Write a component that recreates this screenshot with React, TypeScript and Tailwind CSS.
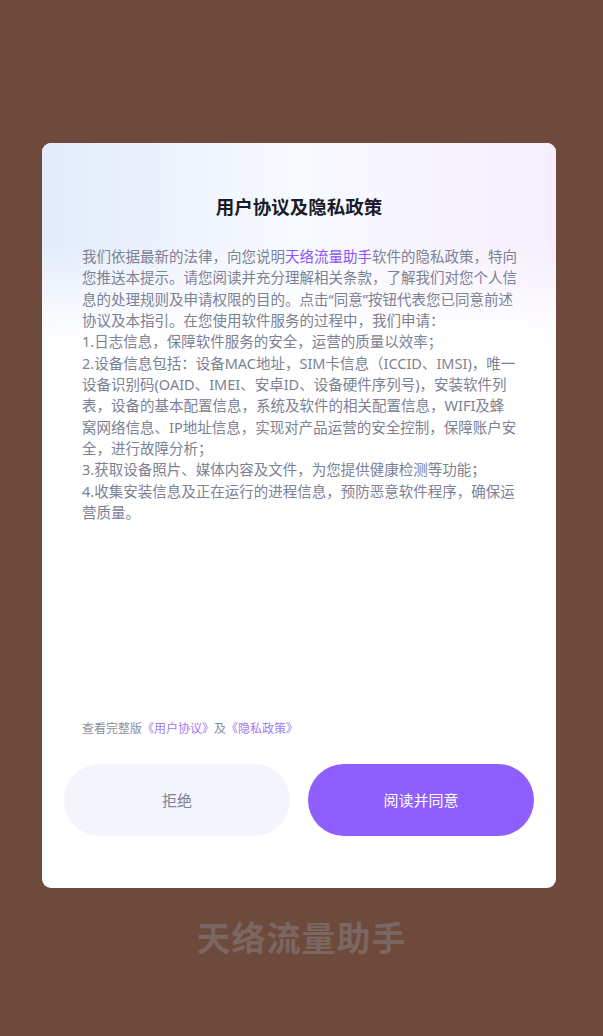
export default function App() {
  const font = "font-['Noto_Sans','Noto_Sans_CJK_SC',sans-serif]";
  return (
    <div className={`min-h-[1036px] w-full bg-[#6d4a3c] ${font} flex flex-col`}>
      <div className="ml-[42px] mt-[143px] w-[514px] h-[745px] rounded-[9px] bg-white overflow-hidden flex flex-col relative">
        <div className="absolute inset-x-0 top-0 h-[200px] bg-gradient-to-r from-[#e2ebfb] via-[#f8fafe] to-[#f6eefc]" />
        <div className="absolute inset-x-0 top-0 h-[200px] bg-gradient-to-b from-transparent via-transparent to-white" />
        <div className="relative flex flex-col flex-1">
          <h1 className="mt-[52px] text-center text-[18.5px] leading-[24px] font-bold text-[#1b1b2a]">用户协议及隐私政策</h1>
          <p className="mt-[27px] pl-[40px] pr-[38px] text-[14.5px] leading-[21.35px] text-[#7d8194]">
            我们依据最新的法律，向您说明<span className="text-[#8a55fb]">天络流量助手</span>软件的隐私政策，特向您推送本提示。请您阅读并充分理解相关条款，了解我们对您个人信息的处理规则及申请权限的目的。点击“同意”按钮代表您已同意前述协议及本指引。在您使用软件服务的过程中，我们申请：
            <br />
            1.日志信息，保障软件服务的安全，运营的质量以效率；
            <br />
            2.设备信息包括：设备MAC地址，SIM卡信息（ICCID、IMSI)，唯一设备识别码(OAID、IMEI、安卓ID、设备硬件序列号)，安装软件列表，设备的基本配置信息，系统及软件的相关配置信息，WIFI及蜂窝网络信息、IP地址信息，实现对产品运营的安全控制，保障账户安全，进行故障分析；
            <br />
            3.获取设备照片、媒体内容及文件，为您提供健康检测等功能；
            <br />
            4.收集安装信息及正在运行的进程信息，预防恶意软件程序，确保运营质量。
          </p>
          <div className="flex-1" />
          <p className="px-[40px] text-[12px] leading-[16px] text-[#8a8e9e]">
            查看完整版<span className="text-[#a07af5]">《用户协议》</span>及<span className="text-[#a07af5]">《隐私政策》</span>
          </p>
          <div className="mt-[27px] mb-[52px] px-[22px] flex gap-[18px]">
            <button className="flex-1 h-[72px] rounded-full bg-[#f4f4fc] text-[15px] text-[#7d8194]">拒绝</button>
            <button className="flex-1 h-[72px] rounded-full bg-[#8e5ffe] text-[15px] text-white">阅读并同意</button>
          </div>
        </div>
      </div>
      <div className="mt-[30px] text-center text-[34px] leading-[40px] font-bold text-[#7b6660] tracking-[1px]">天络流量助手</div>
    </div>
  );
}
